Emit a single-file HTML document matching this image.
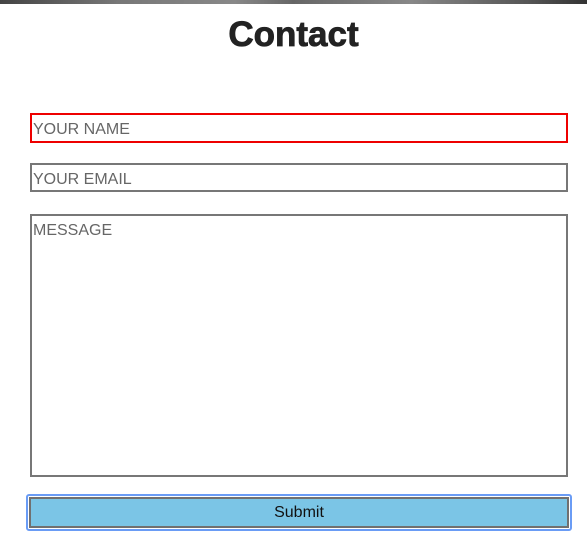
<!DOCTYPE html>
<html><head><style>
html,body{margin:0;padding:0;background:#fff;width:587px;height:556px;overflow:hidden;font-family:"Liberation Sans",sans-serif}
.bar{position:absolute;left:0;top:0;width:587px;height:4px;background:linear-gradient(90deg,#444 0%,#777 20%,#888 40%,#666 50%,#888 70%,#555 90%,#333 100%)}
h1{position:absolute;left:0;width:587px;top:15px;margin:0;text-align:center;font-size:35px;font-weight:900;color:#222;letter-spacing:0px;-webkit-text-stroke:0.8px #222}
.f{position:absolute;left:30px;box-sizing:border-box;border:2px solid #777;color:#666;font-size:16px;padding:6px 1px}
.btn{position:absolute;left:26px;top:494px;width:546px;height:37px;box-sizing:border-box;border:2px solid #6a9cf5;border-radius:3px}
.btn div{position:absolute;left:1px;top:1px;right:1px;bottom:1px;border:2px solid #707070;background:#7bc5e6;text-align:center;font-size:16px;line-height:27px;color:#111}
</style></head><body>
<div class="bar"></div>
<h1>Contact</h1>
<div class="f" style="top:113px;height:30px;border-color:#e00;width:538px">YOUR NAME</div>
<div class="f" style="top:163px;height:29px;width:538px">YOUR EMAIL</div>
<div class="f" style="top:214px;height:263px;width:538px">MESSAGE</div>
<div class="btn"><div>Submit</div></div>
</body></html>
